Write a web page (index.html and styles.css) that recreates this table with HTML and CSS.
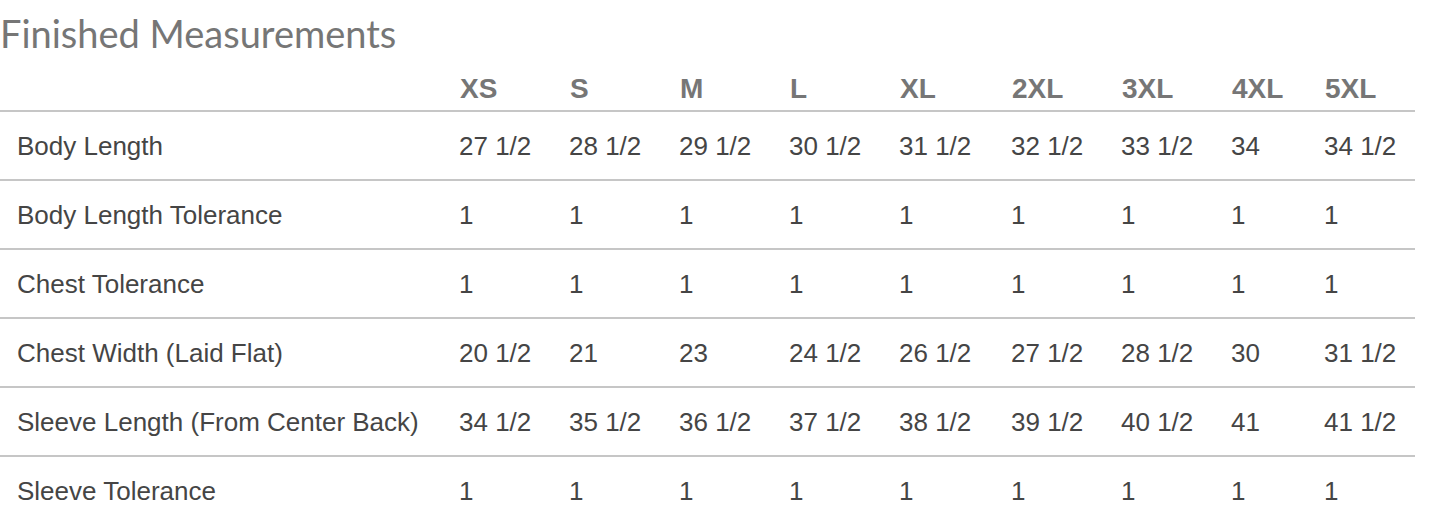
FILE: index.html
```html
<!DOCTYPE html>
<html lang="en">
<head>
<meta charset="utf-8">
<title>Finished Measurements</title>
<link rel="stylesheet" href="styles.css">
</head>
<body>
<section class="measurements">
  <h2 class="title">Finished Measurements</h2>
  <table class="size-table">
    <colgroup>
      <col class="c-label">
      <col class="c-std">
      <col class="c-std">
      <col class="c-std">
      <col class="c-std">
      <col class="c-wide">
      <col class="c-std">
      <col class="c-std">
      <col class="c-narrow">
      <col class="c-last">
    </colgroup>
    <thead>
      <tr>
        <th></th><th>XS</th><th>S</th><th>M</th><th>L</th><th>XL</th><th>2XL</th><th>3XL</th><th>4XL</th><th>5XL</th>
      </tr>
    </thead>
    <tbody>
      <tr><td>Body Length</td><td>27 1/2</td><td>28 1/2</td><td>29 1/2</td><td>30 1/2</td><td>31 1/2</td><td>32 1/2</td><td>33 1/2</td><td>34</td><td>34 1/2</td></tr>
      <tr><td>Body Length Tolerance</td><td>1</td><td>1</td><td>1</td><td>1</td><td>1</td><td>1</td><td>1</td><td>1</td><td>1</td></tr>
      <tr><td>Chest Tolerance</td><td>1</td><td>1</td><td>1</td><td>1</td><td>1</td><td>1</td><td>1</td><td>1</td><td>1</td></tr>
      <tr><td>Chest Width (Laid Flat)</td><td>20 1/2</td><td>21</td><td>23</td><td>24 1/2</td><td>26 1/2</td><td>27 1/2</td><td>28 1/2</td><td>30</td><td>31 1/2</td></tr>
      <tr><td>Sleeve Length (From Center Back)</td><td>34 1/2</td><td>35 1/2</td><td>36 1/2</td><td>37 1/2</td><td>38 1/2</td><td>39 1/2</td><td>40 1/2</td><td>41</td><td>41 1/2</td></tr>
      <tr><td>Sleeve Tolerance</td><td>1</td><td>1</td><td>1</td><td>1</td><td>1</td><td>1</td><td>1</td><td>1</td><td>1</td></tr>
    </tbody>
  </table>
</section>
</body>
</html>
```

FILE: styles.css
```css
html, body {
  margin: 0;
  padding: 0;
  background: #ffffff;
}

.measurements {
  width: 1415px;
}

.title {
  margin: 10px 0 0 0;
  font-family: "Lato", "Open Sans", sans-serif;
  font-weight: 400;
  font-size: 38px;
  line-height: 46px;
  color: #767676;
  letter-spacing: 0;
}

.size-table {
  width: 1415px;
  border-collapse: collapse;
  table-layout: fixed;
  font-family: "Liberation Sans", Arial, sans-serif;
}

.c-label { width: 443px; }
.c-std { width: 110px; }
.c-wide { width: 112px; }
.c-narrow { width: 93px; }
.c-last { width: 107px; }

.size-table th {
  text-align: left;
  font-weight: 700;
  font-size: 28px;
  line-height: 32px;
  color: #767676;
  padding: 17px 0 5px 17px;
  border-bottom: 2px solid #c6c6c6;
}

.size-table td {
  text-align: left;
  font-size: 26px;
  line-height: 30px;
  color: #454545;
  height: 69px;
  padding: 0 0 0 16px;
  vertical-align: middle;
  box-sizing: border-box;
  white-space: nowrap;
}

.size-table td:first-child {
  padding-left: 17px;
}

.size-table tbody tr + tr td {
  border-top: 2px solid #c6c6c6;
}
```
